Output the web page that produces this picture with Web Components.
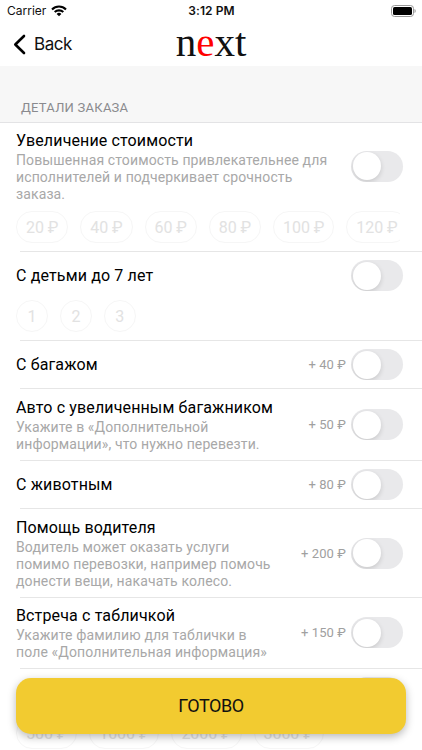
<!DOCTYPE html>
<html lang="ru">
<head>
<meta charset="utf-8">
<title>next</title>
<style>
    html, body {
        margin: 0;
        height: 750px;
        overflow: hidden;
        background: #fff;
    }
</style>
</head>
<body>
<order-screen></order-screen>
<script>
/* Status bar with carrier, clock and battery */
class StatusBar extends HTMLElement {
    constructor() {
        super();
        this.attachShadow({ mode: "open" }).innerHTML = `
            <style>
                :host {
                    display: grid;
                    grid-template-columns: 1fr auto 1fr;
                    align-items: center;
                    height: 22px;
                    padding: 0 6px 0 7px;
                    font: 12px/22px Inter, sans-serif;
                    color: #111;
                }
                .carrier { display: flex; align-items: center; gap: 5px; }
                .clock { font-weight: 600; letter-spacing: .1px; }
                .battery { justify-self: end; }
                svg { display: block; }
            </style>
            <div class="carrier">
                <span>Carrier</span>
                <svg width="16" height="12" viewBox="0 0 16 12" fill="none" stroke="#000" stroke-width="2.1">
                    <path d="M1 4.4a10 10 0 0 1 14 0"/>
                    <path d="M3.7 7.1a6.2 6.2 0 0 1 8.6 0"/>
                    <path d="M8 11.3 5.6 8.9a3.5 3.5 0 0 1 4.8 0z" fill="#000" stroke="none"/>
                </svg>
            </div>
            <div class="clock">3:12 PM</div>
            <svg class="battery" width="25" height="12" viewBox="0 0 25 12">
                <rect x=".5" y=".5" width="22" height="11" rx="3" fill="none" stroke="#999"/>
                <rect x="2" y="2" width="19" height="8" rx="1.6"/>
                <path d="M23.5 4v4c1.6-.6 1.6-3.4 0-4z" fill="#999"/>
            </svg>
        `;
    }
}

/* Navigation bar: back button and the logo */
class NavBar extends HTMLElement {
    constructor() {
        super();
        this.attachShadow({ mode: "open" }).innerHTML = `
            <style>
                :host {
                    display: grid;
                    grid-template-columns: 1fr auto 1fr;
                    height: 44px;
                    padding: 0 13px;
                }
                .back {
                    display: flex;
                    align-items: center;
                    gap: 8px;
                    font: 17px/42px Inter, sans-serif;
                    letter-spacing: -.45px;
                    color: #111;
                }
                .logo {
                    font: 41px/41px "Liberation Serif", serif;
                    color: #111;
                }
                .logo b { font-weight: normal; color: #f00; }
            </style>
            <div class="back">
                <svg width="13" height="21" viewBox="0 0 13 21" fill="none" stroke="#000" stroke-width="2.6" stroke-linecap="round" stroke-linejoin="round">
                    <path d="M11 2 2.3 10.5 11 19"/>
                </svg>
                <span>Back</span>
            </div>
            <div class="logo">n<b>e</b>xt</div>
        `;
    }
}

class ToggleSwitch extends HTMLElement {
    constructor() {
        super();
        this.attachShadow({ mode: "open" }).innerHTML = `
            <style>
                :host {
                    display: block;
                    flex: none;
                    box-sizing: border-box;
                    width: 52px;
                    height: 31px;
                    padding: 1.5px;
                    border-radius: 16px;
                    background: #e9e9eb;
                    overflow: hidden;
                }
                .knob {
                    width: 28px;
                    height: 28px;
                    border-radius: 50%;
                    background: #fff;
                    box-shadow: 0 2px 5px rgba(0, 0, 0, .14);
                }
            </style>
            <div class="knob"></div>
        `;
    }
}

/* Disabled pill with a value */
class OptionChip extends HTMLElement {
    constructor() {
        super();
        this.attachShadow({ mode: "open" }).innerHTML = `
            <style>
                :host {
                    flex: none;
                    display: block;
                    box-sizing: border-box;
                    min-width: 32px;
                    height: 32px;
                    padding: 0 9px;
                    border: 1px solid #f6f6f6;
                    border-radius: 16px;
                    text-align: center;
                    font: 16px/31px Roboto, sans-serif;
                    letter-spacing: -.05px;
                    color: #e2e2e2;
                }
            </style>
            <slot></slot>
        `;
    }
}

/* One order option: title, hint, price, switch and optional chips */
class OptionRow extends HTMLElement {
    constructor() {
        super();
        this.attachShadow({ mode: "open" });
    }

    connectedCallback() {
        const title = this.getAttribute("label") || "";
        const price = this.getAttribute("price") || "";
        this.shadowRoot.innerHTML = `
            <style>
                :host {
                    display: block;
                    padding-left: 16px;
                    background: linear-gradient(#e6e6e6, #e6e6e6) 20px 100% / 100% 1px no-repeat;
                    font-family: Roboto, sans-serif;
                }
                .main {
                    display: flex;
                    align-items: center;
                    box-sizing: border-box;
                    min-height: 48px;
                    padding: var(--row-top, 8px) 19px 9px 0;
                }
                .text { flex: 1; }
                .title {
                    font-size: 16px;
                    line-height: 21px;
                    letter-spacing: .14px;
                    color: #000;
                }
                .hint {
                    padding-top: 1px;
                    margin-bottom: -1px;
                    font-size: 14px;
                    line-height: 17px;
                    letter-spacing: .12px;
                    color: #a8a8a8;
                    white-space: nowrap;
                }
                .price {
                    margin-right: 5px;
                    font-size: 13px;
                    letter-spacing: .08px;
                    color: #a0a0a0;
                }
                ::slotted([slot="chips"]) {
                    display: flex;
                    gap: 11.9px;
                    margin-right: 22px;
                    padding: 0 0 9px;
                    overflow: hidden;
                }
            </style>
            <div class="main">
                <div class="text">
                    <div class="title">${title}</div>
                    <div class="hint"><slot></slot></div>
                </div>
                <div class="price">${price}</div>
                <toggle-switch></toggle-switch>
            </div>
            <slot name="chips"></slot>
        `;
    }
}

class SubmitButton extends HTMLElement {
    constructor() {
        super();
        this.attachShadow({ mode: "open" }).innerHTML = `
            <style>
                :host {
                    display: block;
                    height: 56px;
                    border-radius: 15px;
                    background: #f2cb30;
                    box-shadow: 0 3px 9px rgba(0, 0, 0, .28);
                    text-align: center;
                    font: 18px/56px Roboto, sans-serif;
                    letter-spacing: -.4px;
                    color: #111;
                }
            </style>
            <slot></slot>
        `;
    }
}

class OrderScreen extends HTMLElement {
    constructor() {
        super();
        this.attachShadow({ mode: "open" }).innerHTML = `
            <style>
                :host {
                    display: block;
                    position: relative;
                    width: 422px;
                    height: 750px;
                    overflow: hidden;
                    background: #fff;
                }
                .section {
                    box-sizing: border-box;
                    height: 57px;
                    padding: 32px 21px 0;
                    border-bottom: 1px solid #e3e3e5;
                    background: #f7f7f7;
                    font: 13px/20px Roboto, sans-serif;
                    letter-spacing: .25px;
                    color: #8a8a8e;
                }
                .tight { --row-top: 7px; }
                /* the button floats over the scrolled list */
                submit-button {
                    position: absolute;
                    left: 16px;
                    right: 16px;
                    top: 678px;
                }
            </style>
            <status-bar></status-bar>
            <nav-bar></nav-bar>
            <div class="section">ДЕТАЛИ ЗАКАЗА</div>
            <option-row class="tight" label="Увеличение стоимости">Повышенная стоимость привлекательнее для<br>исполнителей и подчеркивает срочность<br>заказа.
                <div slot="chips">
                    <option-chip>20 ₽</option-chip>
                    <option-chip>40 ₽</option-chip>
                    <option-chip>60 ₽</option-chip>
                    <option-chip>80 ₽</option-chip>
                    <option-chip>100 ₽</option-chip>
                    <option-chip>120 ₽</option-chip>
                </div>
            </option-row>
            <option-row label="С детьми до 7 лет">
                <div slot="chips">
                    <option-chip>1</option-chip>
                    <option-chip>2</option-chip>
                    <option-chip>3</option-chip>
                </div>
            </option-row>
            <option-row label="С багажом" price="+ 40 ₽"></option-row>
            <option-row label="Авто с увеличенным багажником" price="+ 50 ₽">Укажите в «Дополнительной<br>информации», что нужно перевезти.</option-row>
            <option-row label="С животным" price="+ 80 ₽"></option-row>
            <option-row label="Помощь водителя" price="+ 200 ₽">Водитель может оказать услуги<br>помимо перевозки, например помочь<br>донести вещи, накачать колесо.</option-row>
            <option-row class="tight" label="Встреча с табличкой" price="+ 150 ₽">Укажите фамилию для таблички в<br>поле «Дополнительная информация»</option-row>
            <option-row>
                <div slot="chips">
                    <option-chip>500 ₽</option-chip>
                    <option-chip>1000 ₽</option-chip>
                    <option-chip>2000 ₽</option-chip>
                    <option-chip>3000 ₽</option-chip>
                </div>
            </option-row>
            <submit-button>ГОТОВО</submit-button>
        `;
    }
}

customElements.define("status-bar", StatusBar);
customElements.define("nav-bar", NavBar);
customElements.define("toggle-switch", ToggleSwitch);
customElements.define("option-chip", OptionChip);
customElements.define("option-row", OptionRow);
customElements.define("submit-button", SubmitButton);
customElements.define("order-screen", OrderScreen);
</script>
</body>
</html>
